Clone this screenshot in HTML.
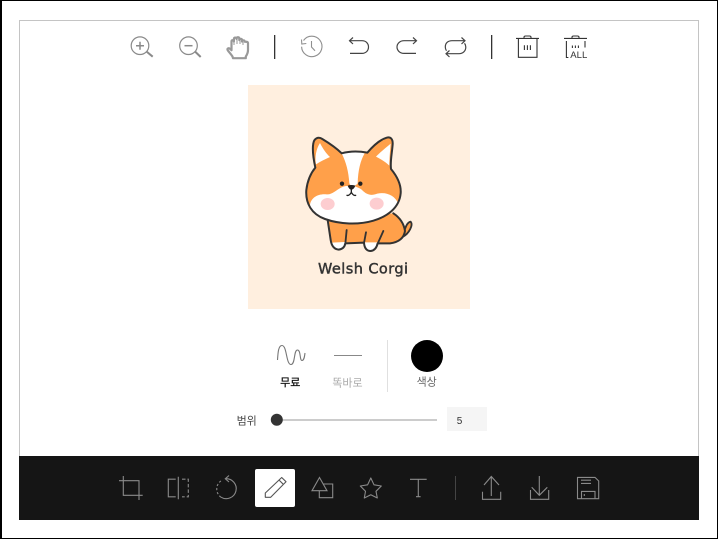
<!DOCTYPE html>
<html lang="ko"><head><meta charset="utf-8"><title>Editor</title>
<style>
html,body{margin:0;padding:0;background:#fff;width:718px;height:539px;overflow:hidden}
svg{display:block;position:absolute;left:0;top:0}
text{font-family:"Liberation Sans","Noto Sans CJK KR",sans-serif}
</style></head><body>
<svg width="718" height="539" viewBox="0 0 718 539" xmlns="http://www.w3.org/2000/svg">
<defs><clipPath id="h"><path d="M76 128C70 100 66 75 70 55C72 40 85 34 97 42C120 56 140 70 155 85C180 78 205 78 232 83C250 62 270 44 290 38C302 35 309 42 308 58C306 85 300 110 303 132C322 155 334 180 332 205C328 250 290 275 250 287C205 300 150 298 105 282C65 268 46 235 49 195C52 170 62 145 76 128Z"/></clipPath></defs>
<rect width="718" height="539" fill="#fff"/>
<!-- outer frame -->
<rect x="0" y="0" width="718" height="1" fill="#000"/><rect x="0" y="538" width="718" height="1" fill="#000"/>
<rect x="0" y="0" width="2" height="539" fill="#000"/><rect x="717" y="0" width="1" height="539" fill="#000"/>
<rect x="19.5" y="20.5" width="679" height="450" fill="#fff" stroke="#c4c4c4"/>
<rect x="19" y="456" width="680" height="64" fill="#151515"/>

<!-- top toolbar -->
<g fill="none" stroke="#8a8a8a" stroke-width="1.2">
<circle cx="140" cy="45.7" r="8.8"/><path d="M146.5 51.5L152.7 56.7" stroke-width="2"/><path d="M136 45.7H144M140 41.7V49.7" stroke-width="1.5"/>
<circle cx="188.5" cy="45.7" r="8.8"/><path d="M195 51.5L200.7 57" stroke-width="2"/><path d="M184.5 45.7H192.5" stroke-width="1.5"/>
</g>
<path d="M232.5 56.5C230.5 53.5 228.8 52 227.6 50C227 48.6 228.5 47.7 229.7 48.6L231.5 50.2V41.5C231.5 39.8 233.7 39.8 233.9 41.5V39C234 37.2 236.4 37.2 236.6 39V38.5C236.7 36.8 239.2 36.8 239.3 38.5V40C239.5 38.4 241.9 38.4 242 40V41.5C242.3 40 244.6 40 244.7 41.7C245 42 247.7 41 248 43V50C248 53 246.8 55 245.8 56.5V58.2H233Z" fill="#fff" stroke="#999" stroke-width="2.2" stroke-linejoin="round"/>
<path d="M234 45V40M237 44V39M240 44V39.5M243 45V42" stroke="#999" stroke-width="1"/>
<rect x="274" y="35" width="1.3" height="24" fill="#333"/>
<g fill="none" stroke="#8f8f8f" stroke-width="1.1">
<path d="M303.5 40.5A10.2 10.2 0 1 1 301.6 46.7"/><path d="M301.5 39.5L301.8 44L306.3 43.5"/><path d="M311.5 41V47L315 50.8"/>
</g>
<g fill="none" stroke="#444" stroke-width="1.2">
<path d="M353 37.5L349.5 40.7L353 44M349.5 40.7H362C366 40.7 368.5 43.5 368.5 47C368.5 50.5 366 53.4 362 53.4H350"/>
<path d="M413 37.5L416.5 40.7L413 44M416.5 40.7H404C400 40.7 397 43.5 397 47C397 50.5 400 53.4 404 53.4H416"/>
<path d="M461.5 37.5L465 40.7L461.5 44M465 40.7H452C448 40.7 445.3 43 445.3 47C445.3 48.5 445.8 49.8 446.5 50.7"/>
<path d="M449.5 50.5L446 53.7L449.5 57M446 53.7H459C463 53.7 465.8 51 465.8 47C465.8 45.5 465.3 44.2 464.5 43.3"/>
</g>
<rect x="491" y="35" width="1.3" height="24" fill="#333"/>
<g fill="none" stroke="#333" stroke-width="1.1">
<path d="M516 38.4H539M524 38V37.3Q524 36 525.5 36H529.5Q531 36 531 37.3V38M518.4 38.4V57.3H537V38.4"/>
<path d="M524.4 45.3V50M527.4 45.3V50M530.4 45.3V50"/>
<path d="M564 38.4H587M572 38V37.3Q572 36 573.5 36H577.5Q579 36 579 37.3V38M566.4 41V57.5H568.4M585 41V47.5"/>
<path d="M572.4 45.5V48M575.4 45.5V48M578.4 45.5V48"/>
</g>
<text x="570.3" y="58" font-size="9" fill="#333" textLength="17" lengthAdjust="spacingAndGlyphs">ALL</text>

<!-- canvas image -->
<rect x="248" y="85" width="222" height="224" fill="#ffefdf"/>
<g transform="translate(290 125) scale(.33333)" stroke-linejoin="round" stroke-linecap="round">
<!-- tail -->
<path d="M340 325C346 310 350 292 362 290C370 300 358 325 338 336Z" fill="#ffa04a" stroke="#333" stroke-width="5.5"/>
<!-- body -->
<path d="M113 285L122 345Q126 372 146 374Q163 372 166 355L222 353Q224 378 242 378Q258 376 263 355L300 355Q340 350 345 318Q340 285 310 265Z" fill="#ffa04a"/>
<path d="M125 353L165 351Q163 372 146 373Q130 372 125 353Z M222 352L262 352Q258 376 242 377Q226 376 222 352Z" fill="#fff"/>
<path d="M113 285L122 345Q126 372 146 374Q163 372 166 355L222 353Q224 378 242 378Q258 376 263 355L300 355Q340 350 345 318Q340 285 310 265" fill="none" stroke="#333" stroke-width="6"/>
<path d="M170 315L166 356M228 322L222 354M280 318L263 356" fill="none" stroke="#333" stroke-width="5.5"/>
<!-- head -->
<path d="M76 128C70 100 66 75 70 55C72 40 85 34 97 42C120 56 140 70 155 85C180 78 205 78 232 83C250 62 270 44 290 38C302 35 309 42 308 58C306 85 300 110 303 132C322 155 334 180 332 205C328 250 290 275 250 287C205 300 150 298 105 282C65 268 46 235 49 195C52 170 62 145 76 128Z" fill="#ffa04a"/>
<!-- white -->
<g clip-path="url(#h)">
<path d="M155 85C175 78 200 78 224 85C212 105 204 135 203 175C195 185 182 185 178 175C176 140 168 110 155 85Z" fill="#fff"/>
<path d="M60 240C62 218 85 205 110 208C125 210 138 195 155 187C172 180 195 180 215 194C232 212 245 212 262 206C290 200 315 212 325 236C328 265 280 300 190 305C110 300 62 270 60 240Z" fill="#fff"/>
</g>
<path d="M90 54C99 72 109 86 120 96C105 103 90 110 78 118C74 98 78 72 90 54Z" fill="#fff"/>
<path d="M302 56C300 80 298 100 298 122C288 112 272 102 258 95C270 82 288 68 302 56Z" fill="#fff"/>
<path d="M76 128C70 100 66 75 70 55C72 40 85 34 97 42C120 56 140 70 155 85C180 78 205 78 232 83C250 62 270 44 290 38C302 35 309 42 308 58C306 85 300 110 303 132C322 155 334 180 332 205C328 250 290 275 250 287C205 300 150 298 105 282C65 268 46 235 49 195C52 170 62 145 76 128Z" fill="none" stroke="#333" stroke-width="6"/>
<ellipse cx="113" cy="237" rx="21" ry="18" fill="#fdcdd0"/><ellipse cx="260" cy="236" rx="21" ry="18" fill="#fdcdd0"/>
<circle cx="156" cy="176" r="6.5" fill="#222"/><circle cx="211" cy="176" r="6.5" fill="#222"/>
<path d="M173 182Q184 178 196 182Q193 192 184 195Q176 192 173 182Z" fill="#222"/>
<path d="M184 192V202M171 211Q178 213 184 202Q190 213 197 211" fill="none" stroke="#222" stroke-width="4"/>
</g>
<text x="318" y="273.5" font-size="14.5" fill="#333" stroke="#333" stroke-width=".45" textLength="90" lengthAdjust="spacing" style="font-family:'DejaVu Sans',sans-serif">Welsh Corgi</text>

<!-- draw options -->
<path d="M277.5 360C278 352 278.5 345.5 282 345.5C287 345.5 286 364.5 291 364.5C295.5 364.5 293.5 350 297.5 350C301 350 299.5 360.5 302 360.5C304 360.5 304.5 357 305 353" fill="none" stroke="#777" stroke-width="1.1"/>
<rect x="334" y="355" width="28" height="1" fill="#888"/>
<text x="290.3" y="386" font-size="11" fill="#111" text-anchor="middle" stroke="#111" stroke-width=".25">무료</text>
<text x="347.5" y="386.5" font-size="11" fill="#aaa" text-anchor="middle">똑바로</text>
<rect x="387" y="340" width="1" height="52" fill="#e0e0e0"/>
<circle cx="427" cy="356" r="16" fill="#000"/>
<text x="426.7" y="385.5" font-size="11" fill="#666" text-anchor="middle">색상</text>
<text x="246.7" y="424.5" font-size="11" fill="#444" text-anchor="middle">범위</text>
<rect x="277" y="419" width="160" height="2" fill="#ccc"/>
<circle cx="276.8" cy="419.8" r="6" fill="#333"/>
<rect x="447" y="407" width="40" height="24" fill="#f5f5f5"/>
<text x="459.5" y="424" font-size="10" fill="#333" text-anchor="middle">5</text>

<!-- bottom toolbar -->
<g fill="none" stroke="#8a8a8a" stroke-width="1.1">
<path d="M119 480.7H139V500M123.3 476V495.3H142.7"/>
<path d="M175.7 479.2H168.3V496.8H175.7M178.3 476.7V499.3"/>
<path d="M182 479.2H188.3V496.8H182" stroke-dasharray="3.5 2"/>
<path d="M225.5 478.7A10 10 0 1 1 221 497.2"/>
<path d="M221 497.2A10 10 0 0 1 221.5 480.5" stroke-dasharray="2.2 2"/>
<path d="M229 475.5L225.3 478.8L229 482"/>
</g>
<rect x="255" y="469" width="40" height="38" rx="2" fill="#fff"/>
<path d="M265.3 493L281.7 477.5L286 481.7L270.7 497.3H265.3ZM279 480L283.3 484.3" fill="none" stroke="#555" stroke-width="1.1" stroke-linejoin="round"/>
<g fill="none" stroke="#8a8a8a" stroke-width="1.1">
<path d="M319.5 477.5L327 490.7H312Z"/>
<path d="M323.5 484H332.7V497.7H319.3V491"/>
<path d="M370.8 478L374 484.8L381.3 486L376 491.3L377.3 498L370.8 494.8L364.3 498L365.5 491.3L360.3 486L367.6 484.8Z" stroke-linejoin="round"/>
<path d="M410 479.3H426.7M418.3 479.3V496.7M416 496.7H420.6"/>
</g>
<rect x="455" y="476" width="1" height="24" fill="#444"/>
<g fill="none" stroke="#8a8a8a" stroke-width="1.1">
<path d="M491.3 496V476.5M484 485L491.3 476.5L499 485M482.5 491.7V499.3H500.7V491.7"/>
<path d="M539.3 476V495.3M531.7 487.3L539.3 495.3L547.3 487.3M530.5 490V499.3H548.7V490"/>
<path d="M577.5 477.4H595L598.7 481V498.7H577.5Z"/>
<path d="M581 480.2H591M581 483.4H591M581.5 498.7V491.4H595V498.7M584.3 494V496"/>
</g>
</svg>
</body></html>
